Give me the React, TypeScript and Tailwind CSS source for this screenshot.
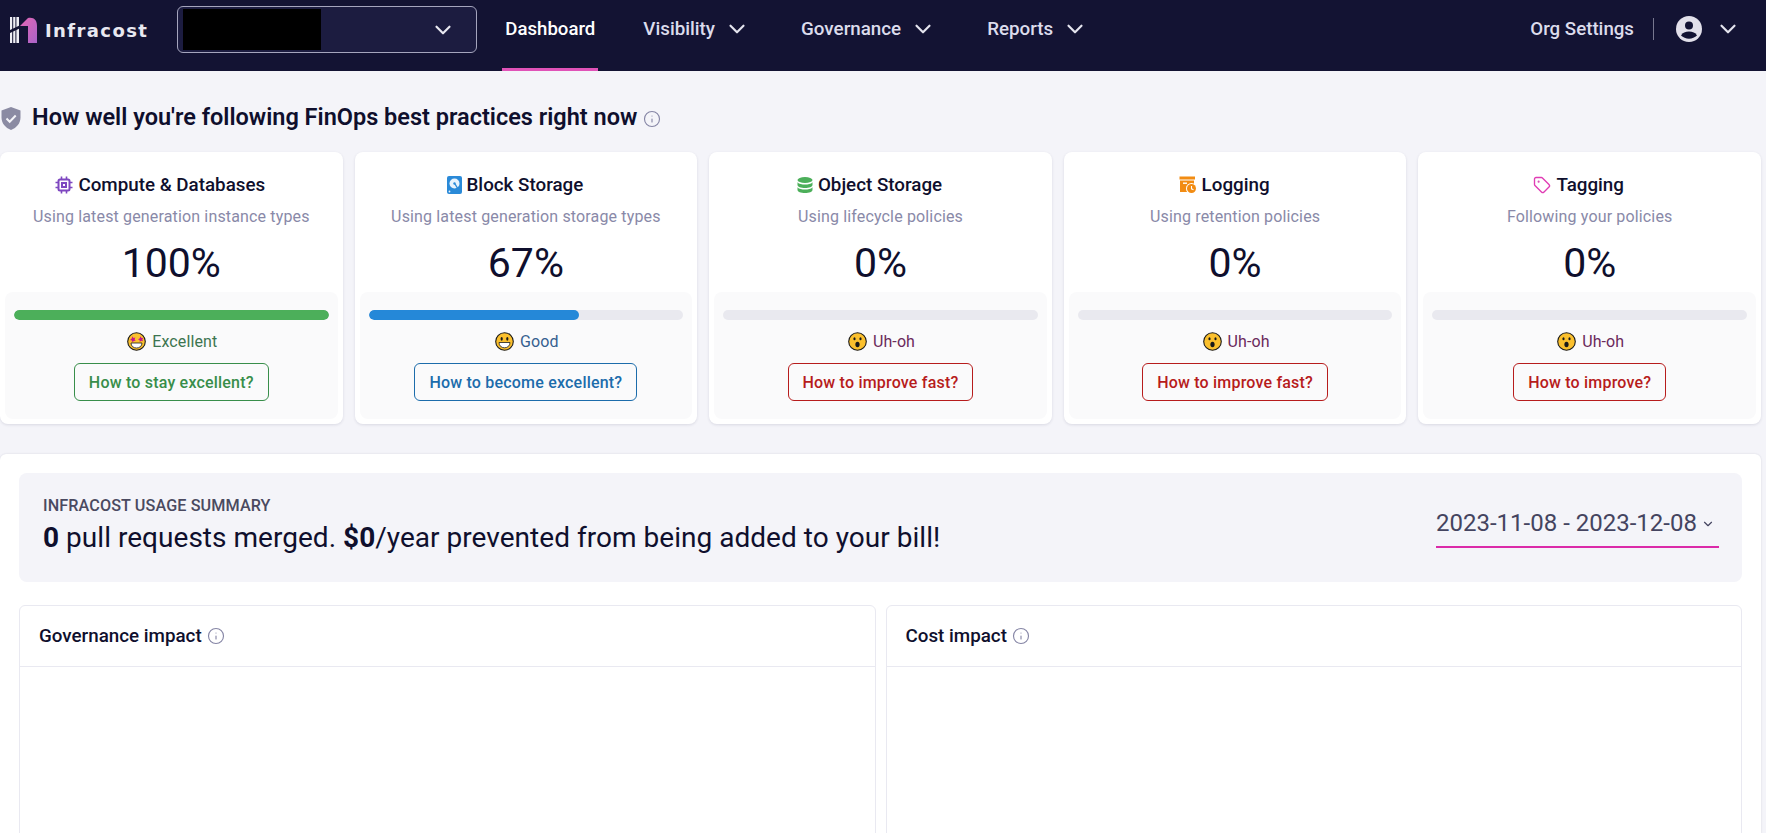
import React from 'react';
import { ChevronDown, Info, Tag } from 'lucide-react';

const Logo = () => (
  <svg width="30" height="28" viewBox="0 0 30 28" className="shrink-0">
    <defs>
      <linearGradient id="arch" x1="0" y1="0" x2="1" y2="1">
        <stop offset="0" stopColor="#e667b4" />
        <stop offset="1" stopColor="#a863c8" />
      </linearGradient>
    </defs>
    <path d="M1 1h2.200v26H1zM4.200 1h2.200v26H4.200zM7.400 1h2.600v26H7.400z" fill="#eeeef4" />
    <path d="M0 14.500L10.500 9.500v3L0 17.500z" fill="#131333" />
    <path d="M11 10 L19 2 C25 1 28 4 28 10 V27 H19 V10 Z" fill="url(#arch)" />
  </svg>
);

const ChipIcon = () => (
  <svg width="18" height="18" viewBox="0 0 18 18" fill="none" stroke="#7e47c0" strokeWidth="2">
    <rect x="3.500" y="3.500" width="11" height="11" rx="1.500" />
    <rect x="7" y="7" width="4" height="4" />
    <path d="M6.500 0.500v2.500M11.500 0.500v2.500M6.500 15v2.500M11.500 15v2.500M0.500 6.500H3M0.500 11.500H3M15 6.500h2.500M15 11.500h2.500" strokeWidth="1.600" />
  </svg>
);

const DiskIcon = () => (
  <svg width="15" height="18" viewBox="0 0 15 18">
    <rect width="15" height="18" rx="2" fill="#2a8ad8" />
    <circle cx="7.500" cy="7.500" r="5" fill="#e8f3fc" />
    <circle cx="7.500" cy="7.500" r="1.200" fill="#2a8ad8" />
    <path d="M8 8l3 5" stroke="#2a8ad8" strokeWidth="1.400" />
    <circle cx="2.500" cy="15.500" r="0.900" fill="#e8f3fc" />
  </svg>
);

const DatabaseIcon = () => (
  <svg width="16" height="16" viewBox="0 0 16 16" fill="#4caf5a">
    <ellipse cx="8" cy="3" rx="7.500" ry="3" />
    <path d="M0.500 5.200C2 7 5 7.600 8 7.600s6-.6 7.500-2.400V8c0 1.700-3.400 3-7.500 3S.5 9.700.5 8z" />
    <path d="M0.500 10.200C2 12 5 12.600 8 12.600s6-.6 7.500-2.400V13c0 1.700-3.400 3-7.500 3S.5 14.700.5 13z" />
  </svg>
);

const ArchiveClockIcon = () => (
  <svg width="18" height="18" viewBox="0 0 18 18">
    <rect x="0.500" y="0.500" width="15.500" height="3" fill="#f28c13" />
    <path d="M1 4.500h14V16H1z" fill="#f28c13" />
    <rect x="4" y="6.500" width="4" height="1.400" fill="#fff" />
    <circle cx="12.500" cy="12.500" r="5.500" fill="#fff" />
    <circle cx="12.500" cy="12.500" r="4.500" fill="#f28c13" />
    <path d="M12.500 10v2.800l2 1" stroke="#fff" strokeWidth="1.100" fill="none" />
  </svg>
);

const StarEyes = () => (
  <svg width="19" height="19" viewBox="0 0 19 19" className="shrink-0">
    <circle cx="9.500" cy="9.500" r="8.800" fill="#fbc02d" stroke="#1a1a1a" strokeWidth="1.100" />
    <path d="M5.500 4.200l1 1.700 1.900-.3-.8 1.700 1 1.500-1.900.1-1.100 1.500-.7-1.800-1.900-.6 1.500-1.200z" fill="#c2188a" />
    <path d="M13.500 4.200l1 1.700 1.800.1-1 1.500.7 1.700-1.900-.4-1.300 1.200-.3-1.900-1.600-.9 1.700-.8z" fill="#c2188a" />
    <path d="M4 11h11c0 3-2.400 5-5.500 5S4 14 4 11z" fill="#fff" stroke="#1a1a1a" strokeWidth="0.800" />
  </svg>
);

const Grin = () => (
  <svg width="19" height="19" viewBox="0 0 19 19" className="shrink-0">
    <circle cx="9.500" cy="9.500" r="8.800" fill="#fbc02d" stroke="#1a1a1a" strokeWidth="1.100" />
    <ellipse cx="6.700" cy="6.800" rx="1.100" ry="1.900" fill="#1a1a1a" />
    <ellipse cx="12.300" cy="6.800" rx="1.100" ry="1.900" fill="#1a1a1a" />
    <path d="M4 10.500h11c0 3.200-2.400 5.300-5.500 5.300S4 13.700 4 10.500z" fill="#fff" stroke="#1a1a1a" strokeWidth="0.800" />
  </svg>
);

const Shocked = () => (
  <svg width="19" height="19" viewBox="0 0 19 19" className="shrink-0">
    <circle cx="9.500" cy="9.500" r="8.800" fill="#fbc02d" stroke="#1a1a1a" strokeWidth="1.100" />
    <ellipse cx="6.500" cy="6.800" rx="1.100" ry="1.500" fill="#1a1a1a" />
    <ellipse cx="12.500" cy="6.800" rx="1.100" ry="1.500" fill="#1a1a1a" />
    <ellipse cx="9.500" cy="12.500" rx="2.100" ry="2.800" fill="#1a1a1a" />
  </svg>
);

const cards = [
  {
    icon: <ChipIcon />,
    title: 'Compute & Databases',
    sub: 'Using latest generation instance types',
    pct: 100,
    barClass: 'bg-[#4caf5a]',
    face: <StarEyes />,
    label: 'Excellent',
    labelClass: 'text-[#3d7550]',
    cta: 'How to stay excellent?',
    ctaClass: 'border-[#388e4a] text-[#388e4a]',
  },
  {
    icon: <DiskIcon />,
    title: 'Block Storage',
    sub: 'Using latest generation storage types',
    pct: 67,
    barClass: 'bg-[#2588d8]',
    face: <Grin />,
    label: 'Good',
    labelClass: 'text-[#35608f]',
    cta: 'How to become excellent?',
    ctaClass: 'border-[#1c6cab] text-[#1c6cab]',
  },
  {
    icon: <DatabaseIcon />,
    title: 'Object Storage',
    sub: 'Using lifecycle policies',
    pct: 0,
    barClass: 'bg-[#2588d8]',
    face: <Shocked />,
    label: 'Uh-oh',
    labelClass: 'text-[#6b2a5c]',
    cta: 'How to improve fast?',
    ctaClass: 'border-[#b71c1c] text-[#b71c1c]',
  },
  {
    icon: <ArchiveClockIcon />,
    title: 'Logging',
    sub: 'Using retention policies',
    pct: 0,
    barClass: 'bg-[#2588d8]',
    face: <Shocked />,
    label: 'Uh-oh',
    labelClass: 'text-[#6b2a5c]',
    cta: 'How to improve fast?',
    ctaClass: 'border-[#b71c1c] text-[#b71c1c]',
  },
  {
    icon: <Tag size={18} color="#e03cb4" strokeWidth={1.800} />,
    title: 'Tagging',
    sub: 'Following your policies',
    pct: 0,
    barClass: 'bg-[#2588d8]',
    face: <Shocked />,
    label: 'Uh-oh',
    labelClass: 'text-[#6b2a5c]',
    cta: 'How to improve?',
    ctaClass: 'border-[#b71c1c] text-[#b71c1c]',
  },
];

function NavMenu({ label, className }: { label: string; className: string }) {
  return (
    <div className={`flex h-[58px] items-center gap-[9px] text-[18.800px] font-medium text-[#dcdcec] ${className}`}>
      <span>{label}</span>
      <ChevronDown size={26} strokeWidth={2} color="#e4e4ee" />
    </div>
  );
}

function ScoreCard({ card }: { card: (typeof cards)[number] }) {
  return (
    <div className="flex h-[272px] flex-col rounded-lg bg-white shadow-[0_1px_3px_rgba(30,30,70,0.12)]">
      <div className="mt-[21px] flex h-6 items-center justify-center gap-[5px] pr-[22px] text-[18.800px] font-medium leading-6 text-[#0f0f2d]">
        {card.icon}
        <span>{card.title}</span>
      </div>
      <div className="mt-[8px] text-center text-[16px] leading-6 tracking-[0.15px] text-[#8989a8]">{card.sub}</div>
      <div className="mt-[10px] text-center text-[41px] leading-[48px] text-[#0f0f2d]">{card.pct}%</div>
      <div className="mx-[5px] mb-[5px] mt-[5px] flex flex-1 flex-col items-center rounded-lg bg-[#fafafb] px-[9px] pt-[18px]">
        <div className="h-[10px] w-full overflow-hidden rounded-full bg-[#e9e9ef]">
          <div className={`h-full rounded-full ${card.barClass}`} style={{ width: `${card.pct}%` }} />
        </div>
        <div className={`mt-[12px] flex h-[19px] items-center gap-[6px] pl-[2px] text-[16px] tracking-[0.1px] ${card.labelClass}`}>
          {card.face}
          <span>{card.label}</span>
        </div>
        <button className={`mt-[12px] h-[38px] rounded-md border bg-transparent px-[14px] pt-[1px] text-[16px] font-medium tracking-[0.2px] ${card.ctaClass}`}>
          {card.cta}
        </button>
      </div>
    </div>
  );
}

function ImpactCard({ title }: { title: string }) {
  return (
    <div className="h-[300px] flex-1 rounded-md border border-[#e9e9f1] bg-white">
      <div className="flex h-[61px] items-center gap-[5px] border-b border-[#e9e9f1] px-[19px] text-[18.800px] font-medium text-[#0f0f2d]">
        <span>{title}</span>
        <Info size={18} color="#8585a5" strokeWidth={1.500} />
      </div>
    </div>
  );
}

export default function App() {
  return (
    <div className="h-screen overflow-hidden bg-[#f4f4f9] font-['Roboto',sans-serif]">
      <header className="flex h-[71px] items-start bg-[#131333]">
        <div className="ml-[9px] mt-[16px] flex items-center gap-[6px]">
          <Logo />
          <span className="font-['DejaVu_Sans',sans-serif] text-[18px] font-bold tracking-[1.400px] text-[#e8e8f0]">Infracost</span>
        </div>
        <div className="ml-[29px] mt-[6px] flex h-[47px] w-[300px] items-center justify-between rounded-md border border-[#a5a5bd] bg-[#1c1c40] pl-[5px] pr-[20px]">
          <div className="h-[41px] w-[138px] bg-black" />
          <ChevronDown size={26} strokeWidth={2} color="#e8e8f0" />
        </div>
        <div className="ml-[25px] flex h-full w-[96px] items-center justify-center border-b-[3px] border-[#e052b8] pb-[9px] text-[18.600px] font-medium text-white">
          Dashboard
        </div>
        <NavMenu label="Visibility" className="ml-[45px]" />
        <NavMenu label="Governance" className="ml-[51px]" />
        <NavMenu label="Reports" className="ml-[51px]" />
        <div className="ml-auto flex h-[58px] items-center pr-[25px]">
          <span className="text-[18.700px] font-medium text-[#dcdcec]">Org Settings</span>
          <div className="ml-[19px] h-[22px] w-px bg-[#77778f]" />
          <svg width="28" height="28" viewBox="0 0 28 28" className="ml-[21px]">
            <circle cx="14" cy="14" r="13" fill="#e2e0ea" />
            <circle cx="14" cy="10.500" r="4" fill="#131333" />
            <path d="M6 20.500c1.500-3 4.500-4 8-4s6.500 1 8 4c-2 2-5 3.200-8 3.200s-6-1.200-8-3.200z" fill="#131333" />
          </svg>
          <ChevronDown size={26} strokeWidth={2} color="#e4e4ee" className="ml-[12px]" />
        </div>
      </header>

      <main className="pr-[5px]">
        <div className="flex h-[81px] items-center pb-[11px] pl-[1px] pt-[24px]">
          <svg width="20" height="23" viewBox="0 0 20 23">
            <path d="M10 0l9.500 3.500v7c0 5.800-3.900 10.300-9.500 12.500C4.400 20.800.5 16.300.5 10.500v-7z" fill="#8b8ba3" />
            <path d="M5.500 11.500l3.200 3.200 6-6.200" fill="none" stroke="#f4f4f9" strokeWidth="2" />
          </svg>
          <h1 className="ml-[11px] text-[23.500px] font-semibold text-[#0f0f2d]">How well you're following FinOps best practices right now</h1>
          <Info size={18} color="#8585a5" strokeWidth={1.500} className="ml-[6px] mt-[2px]" />
        </div>

        <div className="grid grid-cols-5 gap-3">
          {cards.map((c) => (
            <ScoreCard key={c.title} card={c} />
          ))}
        </div>

        <section className="mt-[30px] rounded-md bg-white px-[19px] pb-[20px] pt-[19px] shadow-[0_0_2px_rgba(30,30,70,0.15)]">
          <div className="flex h-[109px] items-start justify-between rounded-lg bg-[#f4f4f9] pl-[24px] pr-[23px]">
            <div className="pt-[23px]">
              <div className="text-[16.200px] font-medium leading-5 tracking-[0.1px] text-[#4a4a60]">INFRACOST USAGE SUMMARY</div>
              <div className="mt-[4px] text-[28px] leading-9 tracking-[0.03px] text-[#0f0f2d]">
                <b className="font-bold">0</b> pull requests merged. <b className="font-bold">$0</b>/year prevented from being added to your bill!
              </div>
            </div>
            <div className="mt-[34px] flex h-[41px] w-[283px] items-start gap-[4px] border-b-2 border-[#db2aa9] text-[24px] leading-8 text-[#444460]">
              <span>2023-11-08 - 2023-12-08</span>
              <ChevronDown size={14} strokeWidth={2} className="mt-[10px]" />
            </div>
          </div>
          <div className="mt-[23px] flex gap-[10px]">
            <ImpactCard title="Governance impact" />
            <ImpactCard title="Cost impact" />
          </div>
        </section>
      </main>
    </div>
  );
}
